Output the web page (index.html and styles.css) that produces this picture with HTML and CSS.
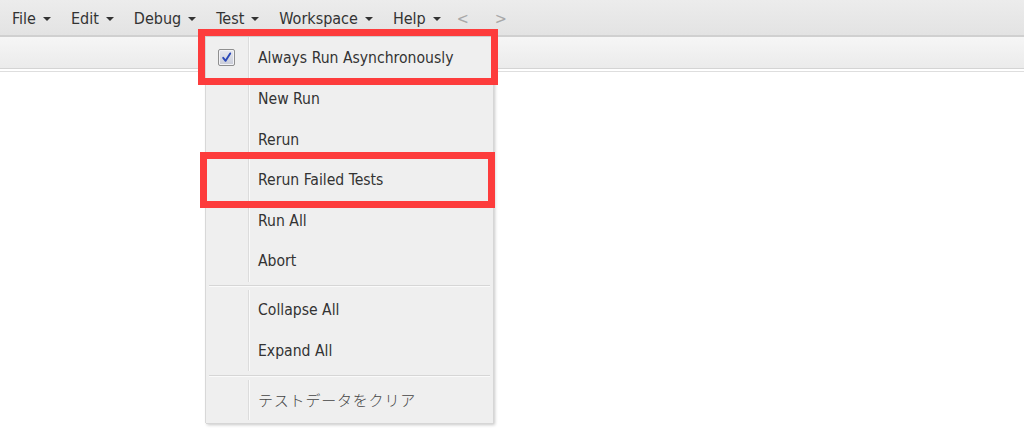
FILE: index.html
```html
<!DOCTYPE html>
<html>
<head>
<meta charset="utf-8">
<link rel="stylesheet" href="styles.css">
</head>
<body>
<div class="menubar">
  <div class="mb-item">File<span class="caret"></span></div>
  <div class="mb-item">Edit<span class="caret"></span></div>
  <div class="mb-item">Debug<span class="caret"></span></div>
  <div class="mb-item">Test<span class="caret"></span></div>
  <div class="mb-item">Workspace<span class="caret"></span></div>
  <div class="mb-item">Help<span class="caret"></span></div>
  <div class="mb-nav back">&lt;</div>
  <div class="mb-nav">&gt;</div>
</div>
<div class="toolbar"></div>
<div class="rule"></div>

<div class="dropdown">
  <div class="dd-item first">
    <div class="gutter"><span class="checkbox"><svg width="13" height="13" viewBox="0 0 13 13"><path d="M3.2 6.8 L5.6 9.8 L10.2 2.4" fill="none" stroke="#2a48b8" stroke-width="1.9" stroke-linecap="round" stroke-linejoin="round"/></svg></span></div>
    <div class="label">Always Run Asynchronously</div>
  </div>
  <div class="dd-item"><div class="gutter"></div><div class="label">New Run</div></div>
  <div class="dd-item"><div class="gutter"></div><div class="label">Rerun</div></div>
  <div class="dd-item"><div class="gutter"></div><div class="label">Rerun Failed Tests</div></div>
  <div class="dd-item"><div class="gutter"></div><div class="label">Run All</div></div>
  <div class="dd-item"><div class="gutter"></div><div class="label">Abort</div></div>
  <div class="dd-sep"></div>
  <div class="dd-item"><div class="gutter"></div><div class="label">Collapse All</div></div>
  <div class="dd-item"><div class="gutter"></div><div class="label">Expand All</div></div>
  <div class="dd-sep"></div>
  <div class="dd-item"><div class="gutter"></div><div class="label jp">テストデータをクリア</div></div>
</div>

<div class="highlight h1"></div>
<div class="highlight h2"></div>
</body>
</html>
```

FILE: styles.css
```css
html, body {
  margin: 0;
  padding: 0;
  background: #ffffff;
  width: 1024px;
  height: 441px;
  overflow: hidden;
  font-family: "DejaVu Sans Condensed", "DejaVu Sans", sans-serif;
  font-size: 15.6px;
  color: #333333;
}

.menubar {
  height: 35px;
  display: flex;
  align-items: center;
  padding-left: 2px;
  background: linear-gradient(#ececec, #e3e3e3);
  border-bottom: 2px solid #d0d0d0;
  font-size: 16px;
}

.mb-item {
  display: flex;
  align-items: center;
  padding: 0 10px;
  color: #333;
  margin-top: 2px;
}

.caret {
  display: inline-block;
  width: 0;
  height: 0;
  margin-left: 7px;
  margin-top: 1px;
  border-left: 4px solid transparent;
  border-right: 4px solid transparent;
  border-top: 4.5px solid #333;
}

.mb-nav {
  color: #a8a8a8;
  padding: 0 13px;
  margin-top: 2px;
}

.mb-nav.back {
  margin-left: -7px;
}

.toolbar {
  height: 31px;
  background: linear-gradient(#f6f6f6, #ebebeb);
  border-bottom: 1px solid #d4d4d4;
}

.rule {
  height: 1px;
  margin-top: 2px;
  background: #dedede;
}

.dropdown {
  position: absolute;
  left: 205px;
  top: 37px;
  width: 288px;
  padding-bottom: 3px;
  background: #efefef;
  box-shadow: 1px 1px 0 #d6d6d6, 2px 2px 3px rgba(0, 0, 0, 0.22);
  border-left: 1px solid #d8d8d8;
  box-sizing: border-box;
}

.dd-item {
  display: flex;
  height: 40.5px;
}

.dd-item.first {
  height: 42px;
}

.gutter {
  width: 42px;
  flex: none;
  border-right: 1px solid #dcdcdc;
  box-shadow: 1px 0 0 #fafafa;
  display: flex;
  align-items: center;
  justify-content: center;
}

.checkbox {
  width: 17px;
  height: 17px;
  border: 1px solid #8f8f8f;
  border-radius: 2px;
  background: linear-gradient(#e6e8f0, #c9ccd8);
  box-shadow: inset 0 0 0 1px #f2f2f6;
  display: flex;
  align-items: center;
  justify-content: center;
  box-sizing: border-box;
  margin-left: -1px;
  margin-top: -2px;
}

.label {
  display: flex;
  align-items: center;
  padding-left: 9px;
  color: #333;
  white-space: nowrap;
}

.label.jp {
  font-family: "Noto Sans CJK JP", sans-serif;
  font-weight: 300;
  font-size: 15px;
  letter-spacing: 0.8px;
  color: #444;
}

.dd-sep {
  height: 8.5px;
  display: flex;
  align-items: center;
  margin: 0 3px;
}

.dd-sep::before {
  content: "";
  display: block;
  width: 100%;
  height: 1px;
  background: #d6d6d6;
  box-shadow: 0 1px 0 #fafafa;
}

.highlight {
  position: absolute;
  border: 7px solid #fd3c3c;
  box-sizing: border-box;
}

.h1 {
  left: 198px;
  top: 29px;
  width: 300px;
  height: 56px;
}

.h2 {
  left: 200px;
  top: 152px;
  width: 295px;
  height: 56px;
}
```
